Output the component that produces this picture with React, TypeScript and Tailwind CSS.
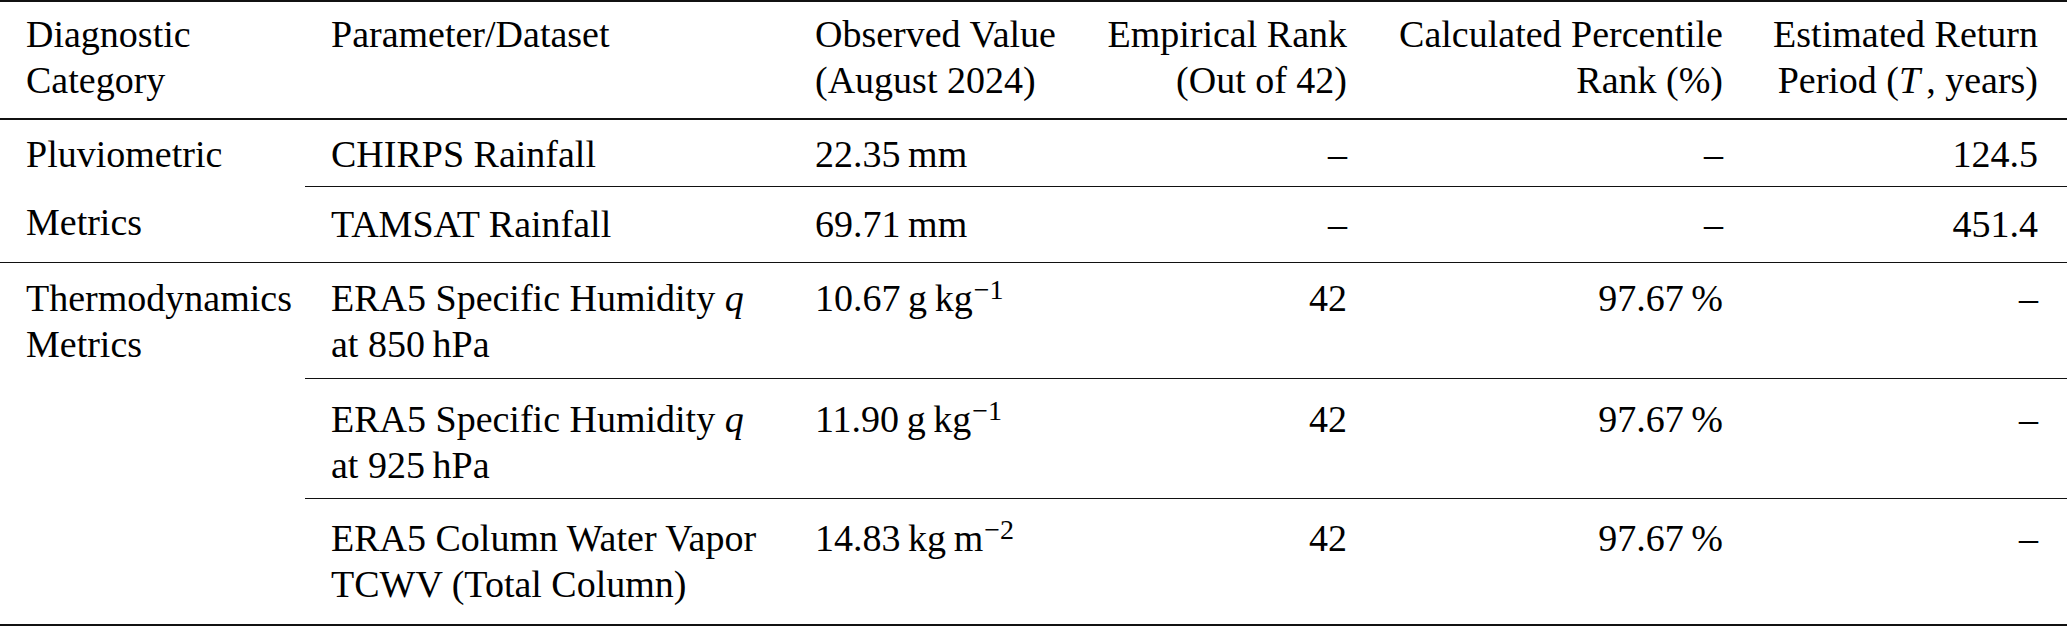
import React from "react"

const th = "align-top whitespace-nowrap p-0 pt-[9px] pb-[15px] border-t-2 border-b-2 border-[#111] font-normal"

const Sup = ({ children }: { children: React.ReactNode }) => (
  <span className="relative -top-[12px] ml-[1px] text-[28px] leading-none">{children}</span>
)

const App = () => {
  return (
    <div className="w-[2067px] h-[628px] bg-white text-black overflow-hidden">
      <table
        className="table-fixed w-[2067px] border-separate border-spacing-0 text-[38px] leading-[46px]"
        style={{ fontFamily: '"Liberation Serif", "Times New Roman", serif' }}
      >
        <colgroup>
          <col className="w-[305px]" />
          <col className="w-[484px]" />
          <col className="w-[293px]" />
          <col className="w-[291px]" />
          <col className="w-[376px]" />
          <col className="w-[318px]" />
        </colgroup>
        <thead>
          <tr>
            <th className={`${th} pl-[26px] text-left`}>
              Diagnostic
              <br />
              Category
            </th>
            <th className={`${th} pl-[26px] text-left`}>Parameter/Dataset</th>
            <th className={`${th} pl-[26px] text-left`}>
              Observed Value
              <br />
              (August 2024)
            </th>
            <th className={`${th} pr-[26px] text-right`}>
              Empirical Rank
              <br />
              (Out of 42)
            </th>
            <th className={`${th} pr-[26px] text-right`}>
              Calculated Percentile
              <br />
              Rank (%)
            </th>
            <th className={`${th} pr-[29px] text-right`}>
              Estimated Return
              <br />
              Period (<i className="mr-[6px]">T</i>, years)
            </th>
          </tr>
        </thead>
        <tbody>
          {/* Pluviometric */}
          <tr>
            <td className="align-top whitespace-nowrap p-0 pt-[11px] pb-[9px] pl-[26px]">Pluviometric</td>
            <td className="align-top whitespace-nowrap p-0 pt-[11px] pb-[9px] pl-[26px] border-b-[1.5px] border-[#111]">
              CHIRPS Rainfall
            </td>
            <td className="align-top whitespace-nowrap p-0 pt-[11px] pb-[9px] pl-[26px] border-b-[1.5px] border-[#111]">
              {"22.35\u2009mm"}
            </td>
            <td className="align-top whitespace-nowrap p-0 pt-[11px] pb-[9px] pr-[26px] text-right border-b-[1.5px] border-[#111]">
              –
            </td>
            <td className="align-top whitespace-nowrap p-0 pt-[11px] pb-[9px] pr-[26px] text-right border-b-[1.5px] border-[#111]">
              –
            </td>
            <td className="align-top whitespace-nowrap p-0 pt-[11px] pb-[9px] pr-[29px] text-right border-b-[1.5px] border-[#111]">
              124.5
            </td>
          </tr>
          <tr>
            <td className="align-top whitespace-nowrap p-0 pt-[12px] pb-[17px] pl-[26px] border-b-[1.5px] border-[#111]">
              Metrics
            </td>
            <td className="align-top whitespace-nowrap p-0 pt-[13.5px] pb-[15.5px] pl-[26px] border-b-[1.5px] border-[#111]">
              TAMSAT Rainfall
            </td>
            <td className="align-top whitespace-nowrap p-0 pt-[13.5px] pb-[15.5px] pl-[26px] border-b-[1.5px] border-[#111]">
              {"69.71\u2009mm"}
            </td>
            <td className="align-top whitespace-nowrap p-0 pt-[13.5px] pb-[15.5px] pr-[26px] text-right border-b-[1.5px] border-[#111]">
              –
            </td>
            <td className="align-top whitespace-nowrap p-0 pt-[13.5px] pb-[15.5px] pr-[26px] text-right border-b-[1.5px] border-[#111]">
              –
            </td>
            <td className="align-top whitespace-nowrap p-0 pt-[13.5px] pb-[15.5px] pr-[29px] text-right border-b-[1.5px] border-[#111]">
              451.4
            </td>
          </tr>

          {/* Thermodynamics */}
          <tr>
            <td className="align-top whitespace-nowrap p-0 pt-[12px] pb-[11px] pl-[26px]">
              Thermodynamics
              <br />
              Metrics
            </td>
            <td className="align-top whitespace-nowrap p-0 pt-[12px] pb-[11px] pl-[26px] border-b-[1.5px] border-[#111]">
              ERA5 Specific Humidity <i>q</i>
              <br />
              {"at 850\u2009hPa"}
            </td>
            <td className="align-top whitespace-nowrap p-0 pt-[12px] pb-[11px] pl-[26px] border-b-[1.5px] border-[#111]">
              {"10.67\u2009g\u2009kg"}
              <Sup>−1</Sup>
            </td>
            <td className="align-top whitespace-nowrap p-0 pt-[12px] pb-[11px] pr-[26px] text-right border-b-[1.5px] border-[#111]">
              42
            </td>
            <td className="align-top whitespace-nowrap p-0 pt-[12px] pb-[11px] pr-[26px] text-right border-b-[1.5px] border-[#111]">
              {"97.67\u2009%"}
            </td>
            <td className="align-top whitespace-nowrap p-0 pt-[12px] pb-[11px] pr-[29px] text-right border-b-[1.5px] border-[#111]">
              –
            </td>
          </tr>
          <tr>
            <td className="p-0" />
            <td className="align-top whitespace-nowrap p-0 pt-[16.5px] pb-[10px] pl-[26px] border-b-[1.5px] border-[#111]">
              ERA5 Specific Humidity <i>q</i>
              <br />
              {"at 925\u2009hPa"}
            </td>
            <td className="align-top whitespace-nowrap p-0 pt-[16.5px] pb-[10px] pl-[26px] border-b-[1.5px] border-[#111]">
              {"11.90\u2009g\u2009kg"}
              <Sup>−1</Sup>
            </td>
            <td className="align-top whitespace-nowrap p-0 pt-[16.5px] pb-[10px] pr-[26px] text-right border-b-[1.5px] border-[#111]">
              42
            </td>
            <td className="align-top whitespace-nowrap p-0 pt-[16.5px] pb-[10px] pr-[26px] text-right border-b-[1.5px] border-[#111]">
              {"97.67\u2009%"}
            </td>
            <td className="align-top whitespace-nowrap p-0 pt-[16.5px] pb-[10px] pr-[29px] text-right border-b-[1.5px] border-[#111]">
              –
            </td>
          </tr>
          <tr>
            <td className="p-0 border-b-2 border-[#111]" />
            <td className="align-top whitespace-nowrap p-0 pt-[16.5px] pb-[17px] pl-[26px] border-b-2 border-[#111]">
              ERA5 Column Water Vapor
              <br />
              TCWV (Total Column)
            </td>
            <td className="align-top whitespace-nowrap p-0 pt-[16.5px] pb-[17px] pl-[26px] border-b-2 border-[#111]">
              {"14.83\u2009kg\u2009m"}
              <Sup>−2</Sup>
            </td>
            <td className="align-top whitespace-nowrap p-0 pt-[16.5px] pb-[17px] pr-[26px] text-right border-b-2 border-[#111]">
              42
            </td>
            <td className="align-top whitespace-nowrap p-0 pt-[16.5px] pb-[17px] pr-[26px] text-right border-b-2 border-[#111]">
              {"97.67\u2009%"}
            </td>
            <td className="align-top whitespace-nowrap p-0 pt-[16.5px] pb-[17px] pr-[29px] text-right border-b-2 border-[#111]">
              –
            </td>
          </tr>
        </tbody>
      </table>
    </div>
  )
}

export default App
